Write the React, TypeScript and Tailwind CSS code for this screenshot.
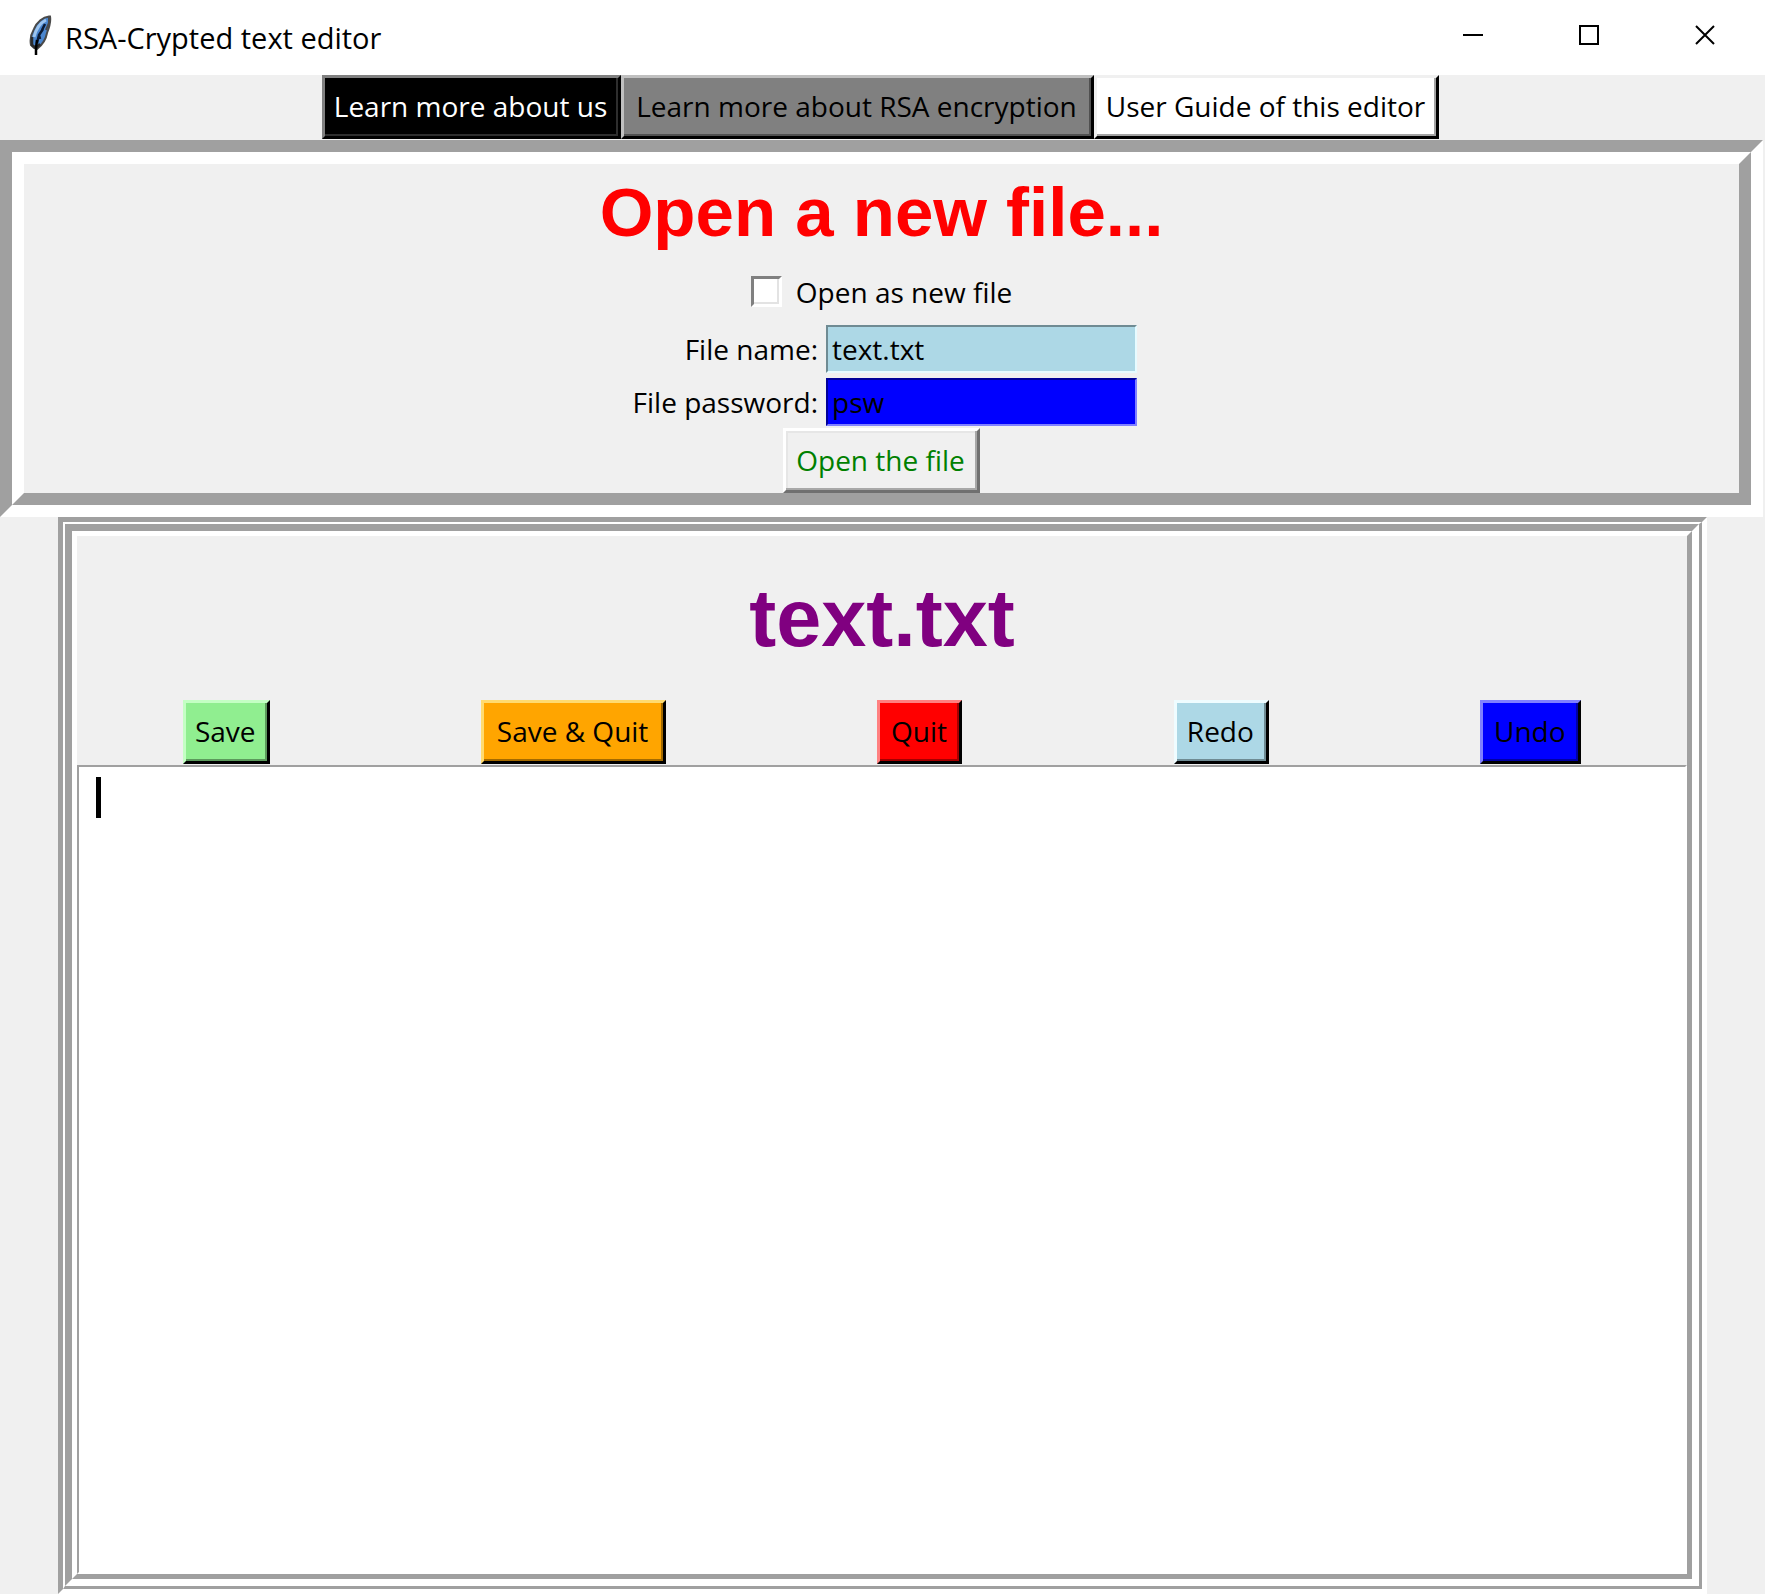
import type { ReactNode } from "react";

const raised =
  "border-3 border-r-black border-b-black h-[64px] pr-0.5 pb-0.5 whitespace-nowrap flex items-center justify-center";

function TkButton({ className, children }: { className: string; children: ReactNode }) {
  return (
    <button type="button" className={`${raised} ${className}`}>
      {children}
    </button>
  );
}

function Feather() {
  return (
    <svg width="24" height="42" viewBox="0 0 24 42" aria-hidden="true">
      <path
        d="M20 1.5 C14 2 8 7 5 14 C2 19 1 25 2 30 L5 33 L8 34 C13 30 17 24 18 18 C20 13 22 7 21 1.5 Z"
        fill="#4a86cf"
        stroke="#4a4a4a"
        strokeWidth="2"
      />
      <path d="M17 5 C11 8 7 14 5 22" fill="none" stroke="#9cc4ee" strokeWidth="3" />
      <path d="M16 9 L13 15 M14 14 L10 20 L11 24 M10 20 L8 28" fill="none" stroke="#0b1a33" strokeWidth="2.5" />
      <path d="M20 2 L20 8 L17 15" fill="none" stroke="#4a4a4a" strokeWidth="2" />
      <path d="M3 22 L3 30 L7 33 L11 29" fill="none" stroke="#2b2b2b" strokeWidth="2.5" />
      <path d="M8 25 L7 33 L7 40" fill="none" stroke="#000" strokeWidth="2.5" />
    </svg>
  );
}

function TitleBar() {
  const control = "flex h-[70px] w-[116px] items-center justify-center";
  return (
    <header className="flex h-[75px] items-start bg-white pr-0.5">
      <div className="flex h-[75px] flex-1 items-center pl-[29px]">
        <div className="-mt-1">
          <Feather />
        </div>
        <h1 className="ml-3 text-[29px] leading-[40px]">RSA-Crypted text editor</h1>
      </div>
      <button type="button" aria-label="Minimize" className={control}>
        <svg width="20" height="20" viewBox="0 0 20 20">
          <path d="M0 10H20" stroke="#000" strokeWidth="2" />
        </svg>
      </button>
      <button type="button" aria-label="Maximize" className={control}>
        <svg width="20" height="20" viewBox="0 0 20 20">
          <rect x="1" y="1" width="18" height="18" fill="none" stroke="#000" strokeWidth="2" />
        </svg>
      </button>
      <button type="button" aria-label="Close" className={control}>
        <svg width="20" height="20" viewBox="0 0 20 20">
          <path d="M1 1L19 19M19 1L1 19" stroke="#000" strokeWidth="2" />
        </svg>
      </button>
    </header>
  );
}

function OpenPanel() {
  const field = "h-[48px] w-full rounded-none border-2 px-1 leading-[38px] outline-none";
  return (
    <section className="mr-0.5 border-12 border-t-[#a0a0a0] border-r-white border-b-white border-l-[#a0a0a0]">
      <form className="flex flex-col items-center border-12 border-t-white border-r-[#a0a0a0] border-b-[#a0a0a0] border-l-white">
        <h2 className="font-['Liberation_Sans',Arial,sans-serif] text-[69px] leading-[97px] font-bold text-[#ff0000]">
          Open a new file...
        </h2>
        <label className="flex h-[61px] items-center gap-[14px]">
          <input
            type="checkbox"
            className="size-[31px] appearance-none border-3 border-t-[#808080] border-r-white border-b-white border-l-[#808080] bg-white shadow-[inset_-2px_-2px_0_#e3e3e3]"
          />
          Open as new file
        </label>
        <div className="grid auto-rows-[53px] grid-cols-[200px_311px] items-center">
          <label htmlFor="file-name" className="pr-2 text-right">
            File name:
          </label>
          <input
            id="file-name"
            defaultValue="text.txt"
            className={`${field} border-t-[#6f8b93] border-r-[#e6fbff] border-b-[#e6fbff] border-l-[#6f8b93] bg-[#add8e6]`}
          />
          <label htmlFor="file-password" className="pr-2 text-right">
            File password:
          </label>
          <input
            id="file-password"
            defaultValue="psw"
            className={`${field} border-t-[#000099] border-r-[#8080ff] border-b-[#8080ff] border-l-[#000099] bg-[#0000ff]`}
          />
        </div>
        <button
          type="button"
          className="flex h-[65px] w-[197px] items-center justify-center border-3 border-t-white border-r-[#707070] border-b-[#707070] border-l-white pr-0.5 pb-0.5 whitespace-nowrap text-[#008000] shadow-[inset_-2px_-2px_0_#a8a8a8,inset_2px_2px_0_#e6e6e6]"
        >
          Open the file
        </button>
      </form>
    </section>
  );
}

function Editor() {
  return (
    <section className="mr-[58px] ml-[58px] flex flex-1 border-5 border-t-[#a0a0a0] border-r-white border-b-white border-l-[#a0a0a0]">
      <div className="flex flex-1 border-t-2 border-r-3 border-b-3 border-l-2 border-t-white border-r-[#a0a0a0] border-b-[#a0a0a0] border-l-white">
        <div className="flex flex-1 border-7 border-t-[#a0a0a0] border-r-white border-b-white border-l-[#a0a0a0]">
          <div className="flex flex-1 flex-col border-5 border-t-white border-r-[#a0a0a0] border-b-[#a0a0a0] border-l-white">
            <h2 className="text-center font-['Liberation_Sans',Arial,sans-serif] text-[81px] leading-[164px] font-bold text-[#800080]">
              text.txt
            </h2>
            <div className="flex h-[65px] items-start justify-around">
              <TkButton className="w-[87px] border-t-[#c4ffc4] border-l-[#c4ffc4] bg-[#90ee90] shadow-[inset_-2px_-2px_0_#5c995c]">
                Save
              </TkButton>
              <TkButton className="w-[185px] border-t-[#ffdb70] border-l-[#ffdb70] bg-[#ffa500] shadow-[inset_-2px_-2px_0_#a36a00]">
                Save &amp; Quit
              </TkButton>
              <TkButton className="w-[85px] border-t-[#ff8080] border-l-[#ff8080] bg-[#ff0000] shadow-[inset_-2px_-2px_0_#a30000]">
                Quit
              </TkButton>
              <TkButton className="w-[95px] border-t-[#effcff] border-l-[#effcff] bg-[#add8e6] shadow-[inset_-2px_-2px_0_#6f8b93]">
                Redo
              </TkButton>
              <TkButton className="w-[101px] border-t-[#8080ff] border-l-[#8080ff] bg-[#0000ff] shadow-[inset_-2px_-2px_0_#0000a3]">
                Undo
              </TkButton>
            </div>
            <div className="relative flex flex-1">
              <textarea
                aria-label="File contents"
                className="flex-1 resize-none rounded-none border-2 border-t-[#a0a0a0] border-r-white border-b-white border-l-[#a0a0a0] bg-white px-4 py-2 leading-[44px] outline-none"
              />
              <div className="absolute top-3 left-[19px] h-[41px] w-[5px] bg-black" />
            </div>
          </div>
        </div>
      </div>
    </section>
  );
}

export default function App() {
  return (
    <div className="flex min-h-screen flex-col border-b border-white bg-[#f0f0f0] font-['Open_Sans','Noto_Sans',sans-serif] text-[28px] leading-[38px] text-black">
      <TitleBar />
      <nav className="flex h-[65px] items-start justify-center pr-1">
        <TkButton className="w-[299px] border-t-[#808080] border-l-[#808080] bg-black text-white shadow-[inset_-2px_-2px_0_#2e2e2e]">
          Learn more about us
        </TkButton>
        <TkButton className="w-[473px] border-t-[#c0c0c0] border-l-[#c0c0c0] bg-[#808080] shadow-[inset_-2px_-2px_0_#505050]">
          Learn more about RSA encryption
        </TkButton>
        <TkButton className="w-[345px] border-t-[#f0f0f0] border-l-[#f0f0f0] bg-white shadow-[inset_-2px_-2px_0_#a3a3a3]">
          User Guide of this editor
        </TkButton>
      </nav>
      <OpenPanel />
      <Editor />
    </div>
  );
}
